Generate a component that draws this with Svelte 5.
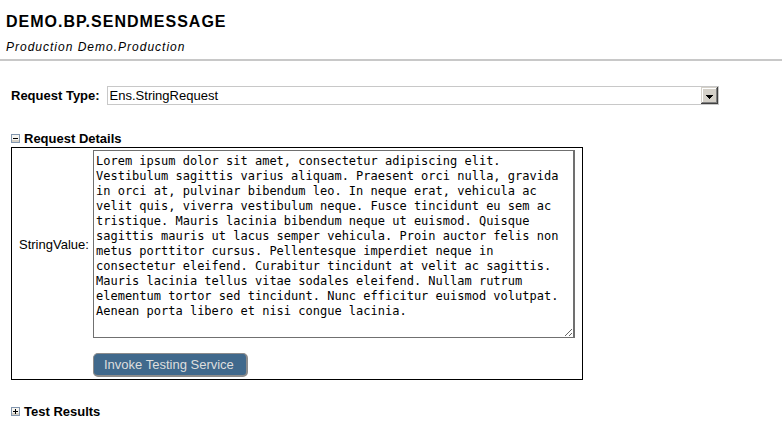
<script>
  let requestType = $state('Ens.StringRequest');
  let detailsOpen = $state(true);
  let resultsOpen = $state(false);
  let stringValue = $state(
    'Lorem ipsum dolor sit amet, consectetur adipiscing elit. Vestibulum sagittis varius aliquam. Praesent orci nulla, gravida in orci at, pulvinar bibendum leo. In neque erat, vehicula ac velit quis, viverra vestibulum neque. Fusce tincidunt eu sem ac tristique. Mauris lacinia bibendum neque ut euismod. Quisque sagittis mauris ut lacus semper vehicula. Proin auctor felis non metus porttitor cursus. Pellentesque imperdiet neque in consectetur eleifend. Curabitur tincidunt at velit ac sagittis. Mauris lacinia tellus vitae sodales eleifend. Nullam rutrum elementum tortor sed tincidunt. Nunc efficitur euismod volutpat. Aenean porta libero et nisi congue lacinia.'
  );
</script>

{#snippet toggleIcon(open)}
  <svg class="toggle-icon" width="9" height="9" viewBox="0 0 9 9" shape-rendering="crispEdges" aria-hidden="true">
    <rect width="9" height="9" fill="#8296ae" />
    <rect x="1" y="1" width="7" height="7" fill="#f6f5f1" />
    <path d="M1 6h7v2H1z" fill="#d5d0c6" />
    <path d={open ? 'M2 4h5v1H2z' : 'M2 4h5v1H2zM4 2h1v5H4z'} fill="#000" />
  </svg>
{/snippet}

<header>
  <h1>DEMO.BP.SENDMESSAGE</h1>
  <p>Production Demo.Production</p>
</header>

<main>
  <div class="type-row">
    <label for="request-type">Request Type:</label>
    <div class="select-box">
      <select id="request-type" bind:value={requestType}>
        <option>Ens.StringRequest</option>
      </select>
      <svg class="arrow" width="18" height="19" viewBox="0 0 18 19" shape-rendering="crispEdges" aria-hidden="true">
        <rect width="18" height="19" fill="#c8c8c8" />
        <rect y="1" width="17" height="17" fill="#404040" />
        <rect y="1" width="16" height="16" fill="#d4d0c8" />
        <path d="M1 16V2H15V3H2V16z" fill="#fff" />
        <path d="M15 2h1v15H1v-1h14z" fill="#808080" />
        <path d="M5 9h7v1H5zM6 10h5v1H6zM7 11h3v1H7zM8 12h1v1H8z" fill="#000" />
      </svg>
    </div>
  </div>

  <section class="details">
    <h2>
      <button type="button" class="toggle" aria-expanded={detailsOpen} onclick={() => (detailsOpen = !detailsOpen)}>
        {@render toggleIcon(detailsOpen)}Request Details
      </button>
    </h2>
    {#if detailsOpen}
      <form class="panel" onsubmit={(e) => e.preventDefault()}>
        <label for="string-value">StringValue:</label>
        <textarea id="string-value" spellcheck="false" bind:value={stringValue}></textarea>
        <button type="submit" class="invoke">Invoke Testing Service</button>
      </form>
    {/if}
  </section>

  <section class="results">
    <h2>
      <button type="button" class="toggle" aria-expanded={resultsOpen} onclick={() => (resultsOpen = !resultsOpen)}>
        {@render toggleIcon(resultsOpen)}Test Results
      </button>
    </h2>
  </section>
</main>

<style>
  :global(body) {
    background: #fff;
    color: #000;
    font-family: 'Liberation Sans', Arial, sans-serif;
    font-size: 13px;
  }

  header {
    padding: 12px 6px 4px;
    border-bottom: 2px solid #c8c8c8;
    letter-spacing: 1px;
  }

  h1 {
    margin: 0;
    font-size: 16px;
    line-height: 20px;
  }

  header p {
    margin: 8px 0 0;
    font-size: 12px;
    font-style: italic;
    line-height: 15px;
  }

  main {
    padding: 25px 11px 11px;
  }

  .type-row {
    display: flex;
    align-items: center;
    gap: 7px;
    margin-right: 52px;
  }

  .type-row label {
    font-weight: bold;
  }

  .select-box {
    position: relative;
    flex: 1;
    min-width: 0;
  }

  select {
    display: block;
    box-sizing: border-box;
    width: 100%;
    height: 19px;
    padding: 0 20px 0 2px;
    border: 1px solid #c8c8c8;
    border-radius: 0;
    appearance: none;
    background: #fff;
    color: #000;
    font: 13px/17px 'Liberation Sans', Arial, sans-serif;
  }

  .arrow {
    position: absolute;
    top: 0;
    right: 0;
    pointer-events: none;
  }

  .details {
    margin-top: 26px;
  }

  h2 {
    margin: 0;
    font-size: 13px;
    line-height: 16px;
  }

  .toggle {
    display: flex;
    align-items: center;
    gap: 4px;
    padding: 0;
    border: 0;
    background: none;
    color: inherit;
    font: inherit;
  }

  .toggle-icon {
    margin-bottom: 2px;
  }

  .panel {
    display: grid;
    grid-template-columns: 72px minmax(0, 482px);
    column-gap: 2px;
    row-gap: 15px;
    align-items: center;
    box-sizing: border-box;
    width: fit-content;
    max-width: 100%;
    padding: 2px 7px;
    border: 1px solid #000;
  }

  textarea {
    box-sizing: border-box;
    width: 482px;
    max-width: 100%;
    height: 188px;
    padding: 3px 2px 2px;
    border: 1px solid #707070;
    border-right-width: 2px;
    border-radius: 0;
    background: #fff;
    color: #000;
    font: 12px/15px 'DejaVu Sans Mono', Consolas, monospace;
  }

  .invoke {
    grid-column: 2;
    justify-self: start;
    height: 24px;
    padding: 0 12px 0 10px;
    border: 1px solid #8c8c8c;
    border-right-width: 2px;
    border-bottom-width: 2px;
    border-radius: 5px;
    background: #40698c;
    color: #dedede;
    font: 13px/20px 'Liberation Sans', Arial, sans-serif;
  }

  .results {
    margin-top: 24px;
  }
</style>
